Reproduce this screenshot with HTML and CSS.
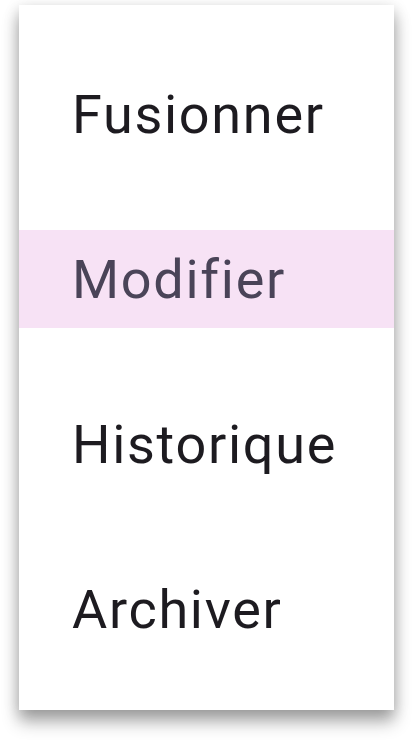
FILE: index.html
```html
<!DOCTYPE html>
<html lang="fr">
<head>
<meta charset="utf-8">
<link rel="stylesheet" href="styles.css">
</head>
<body>
<div class="menu">
  <div class="item">Fusionner</div>
  <div class="item active">Modifier</div>
  <div class="item">Historique</div>
  <div class="item">Archiver</div>
</div>
</body>
</html>
```
FILE: styles.css
```css
html, body {
  margin: 0;
  padding: 0;
  background: #ffffff;
}
html {
  height: 100%;
}
body {
  min-height: 743px;
  box-sizing: border-box;
  padding: 5px 19px 0 19px;
  font-family: Roboto, "Noto Sans", sans-serif;
}
.menu {
  width: 375px;
  height: 705px;
  box-sizing: border-box;
  background: #ffffff;
  padding-top: 60px;
  display: flex;
  flex-direction: column;
  gap: 67px;
  box-shadow: 0 12px 16px rgba(0, 0, 0, 0.3), 0 4px 14px rgba(0, 0, 0, 0.18);
}
.item {
  height: 98px;
  flex-shrink: 0;
  display: flex;
  align-items: center;
  padding-left: 53px;
  font-size: 54px;
  letter-spacing: 1.7px;
  color: #1d1b20;
}
.item.active {
  background: #f7e2f5;
  color: #4a4458;
}
```
